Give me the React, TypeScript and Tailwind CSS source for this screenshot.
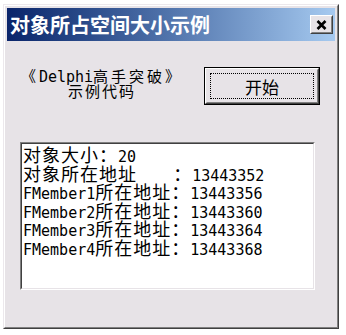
import React from 'react';

const CJK_RUN = /([\u3000-\u303f\u3400-\u9fff\uff00-\uffef]+)/;

function Mixed({ text, cjk, latin }: { text: string; cjk: string; latin: string }) {
  return (
    <>
      {text.split(CJK_RUN).map((part, i) =>
        part ? (
          <span key={i} className={i % 2 ? cjk : latin}>
            {part}
          </span>
        ) : null
      )}
    </>
  );
}

const memoLines = [
  '对象大小：20',
  '对象所在地址    ：13443352',
  'FMember1所在地址：13443356',
  'FMember2所在地址：13443360',
  'FMember3所在地址：13443364',
  'FMember4所在地址：13443368',
];

const memoCjk = "inline-block h-[18px] leading-[18px] font-['Noto_Sans_CJK_SC',sans-serif] text-[18px] tracking-[1px]";
const memoLatin = "inline-block h-[18px] leading-[18px] font-['DejaVu_Sans_Mono',monospace] text-[15px]";

export default function App() {
  return (
    <div className="w-[346px] h-[335px] bg-white pt-[4px] pl-[3px]">
      <div className="w-[336px] h-[325px] flex border border-t-[#ece8ec] border-l-[#ece8ec] border-r-[#404040] border-b-[#404040]">
        <div className="flex-1 flex flex-col p-[2px] bg-[#e7e3e7] border border-t-white border-l-white border-r-[#808080] border-b-[#808080]">
          {/* title bar */}
          <div className="h-[33px] flex items-center justify-between bg-gradient-to-r from-[#0a246a] to-[#a6caf0] pl-[3px] pr-[2px]">
            <span className="text-white font-bold text-[20px] leading-none font-['Noto_Sans_CJK_SC',sans-serif]">
              对象所占空间大小示例
            </span>
            <div className="w-[23px] h-[19px] flex border border-t-white border-l-white border-r-[#404040] border-b-[#404040]">
              <div className="flex-1 flex items-center justify-center bg-[#e7e3e7] border border-t-[#e7e3e7] border-l-[#e7e3e7] border-r-[#808080] border-b-[#808080]">
                <svg width="11" height="10" viewBox="0 0 11 10">
                  <path d="M1.5 1 L9.5 9 M9.5 1 L1.5 9" stroke="#000" strokeWidth="2.6" />
                </svg>
              </div>
            </div>
          </div>

          {/* body */}
          <div className="flex-1 pl-[13px] pt-[26px]">
            <div className="flex">
              <div className="w-[164px] flex flex-col items-center text-black leading-[15px] pt-[1px]">
                <div className="h-[15px] whitespace-pre">
                  <Mixed
                    text="《Delphi高手突破》"
                    cjk="inline-block h-[15px] leading-[15px] font-['Noto_Sans_CJK_SC',sans-serif] text-[15px] tracking-[3px]"
                    latin="inline-block h-[15px] leading-[15px] font-['DejaVu_Sans_Mono',monospace] text-[15px]"
                  />
                </div>
                <div className="h-[15px] text-[15px] tracking-[2px] font-['Noto_Sans_CJK_SC',sans-serif]">
                  示例代码
                </div>
              </div>
              <div className="ml-[20px] w-[116px] h-[38px] flex border border-black">
                <div className="flex-1 flex border border-t-white border-l-white border-r-[#404040] border-b-[#404040]">
                  <div className="flex-1 flex p-[3px] border border-t-[#e7e3e7] border-l-[#e7e3e7] border-r-[#808080] border-b-[#808080]">
                    <div className="flex-1 flex items-center justify-center border border-dotted border-black">
                      <span className="text-[17px] leading-none text-black font-['Noto_Sans_CJK_SC',sans-serif]">开始</span>
                    </div>
                  </div>
                </div>
              </div>
            </div>

            {/* memo */}
            <div className="mt-[37px] w-[295px] h-[148px] flex border border-t-[#808080] border-l-[#808080] border-r-white border-b-white">
              <div className="flex-1 bg-white pl-[1px] pt-[1px] border border-t-[#404040] border-l-[#404040] border-r-[#e7e3e7] border-b-[#e7e3e7] text-black">
                {memoLines.map((line) => (
                  <div key={line} className="h-[18.6px] leading-[18.6px] whitespace-pre">
                    <Mixed text={line} cjk={memoCjk} latin={memoLatin} />
                  </div>
                ))}
              </div>
            </div>
          </div>
        </div>
      </div>
    </div>
  );
}
